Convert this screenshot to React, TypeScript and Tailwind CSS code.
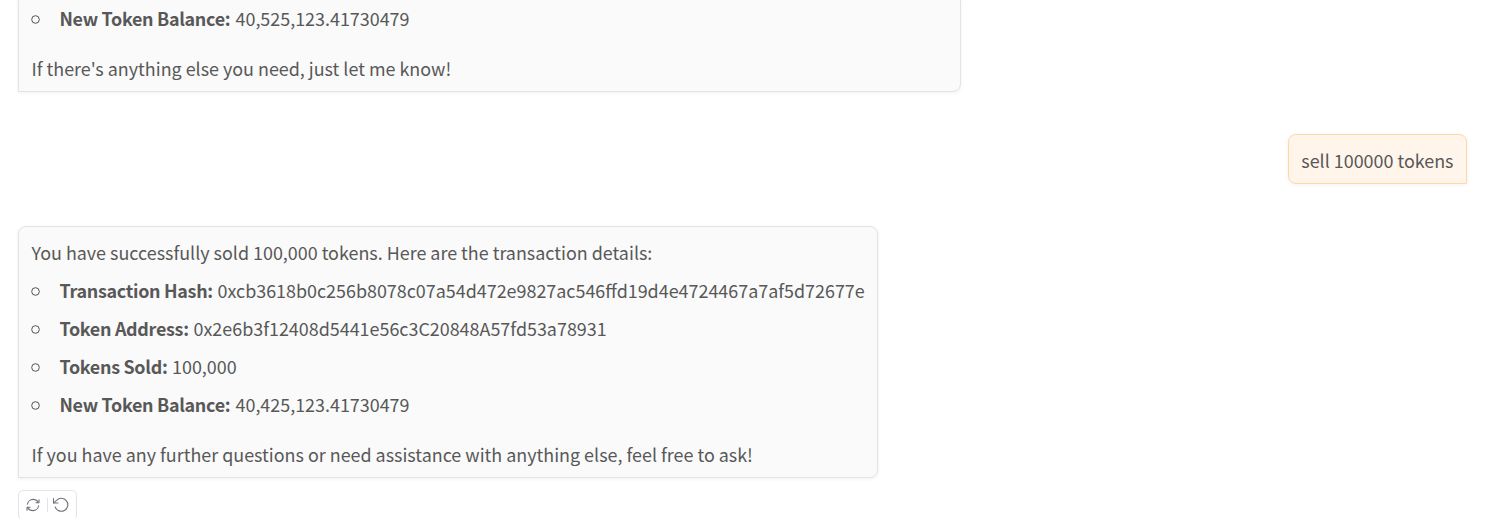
import type { ReactNode } from "react";

function Item({ label, width, children }: { label: string; width: string; children: ReactNode }) {
  return (
    <li className="flex h-[30px] items-center">
      <svg viewBox="0 0 9 9" className="mt-[2.5px] mr-[19.5px] -ml-[0.5px] size-[9px] shrink-0" fill="none" stroke="#525252">
        <circle cx="4.5" cy="4.5" r="3.8" />
      </svg>
      <strong className={`${width} shrink-0 font-bold tracking-[-0.29px]`}>{label}</strong>
      <span>{children}</span>
    </li>
  );
}

function BotMessage({ className, children }: { className: string; children: ReactNode }) {
  return (
    <section
      className={`${className} flex flex-col gap-2 rounded-lg rounded-bl-none border border-[#e4e4e7] bg-[#fafafa] pt-[10px] pr-3 pb-2 pl-[12.5px] shadow-[0_1px_4px_0_rgba(0,0,0,0.06)]`}
    >
      {children}
    </section>
  );
}

function RetryIcon() {
  return (
    <svg viewBox="0 0 24 24" className="size-[18px]" fill="none" stroke="currentColor" strokeWidth="1.5" strokeLinecap="round" strokeLinejoin="round">
      <path d="M19.1679 9C18.0247 6.46819 15.3006 4.5 11.9999 4.5C8.31459 4.5 5.05104 7.44668 4.54932 11" />
      <path d="M16 9H19.4C19.7314 9 20 8.73137 20 8.4V5" />
      <path d="M4.88146 15C5.92458 17.5318 8.64874 19.5 12.0494 19.5C15.7347 19.5 18.9983 16.5533 19.5 13" />
      <path d="M8.04932 15H4.64932C4.31795 15 4.04932 15.2686 4.04932 15.6V19" />
    </svg>
  );
}

function UndoIcon() {
  return (
    <svg viewBox="0 0 18 18" className="size-[18px]" fill="none" stroke="currentColor" strokeWidth="1.1" strokeLinecap="round" strokeLinejoin="round">
      <path d="M1.5 2.5V7H6" />
      <path d="M1.8 6.8L4.6 4.3A6.5 6.5 0 1 1 3.2 11" />
    </svg>
  );
}

export default function App() {
  return (
    <main className="flex h-[518px] w-[1487px] flex-col overflow-hidden bg-white pr-5 pl-[18px] font-['Noto_Sans_CJK_SC',sans-serif] text-[17.92px] leading-[30px] whitespace-nowrap text-[#585858]">
      <BotMessage className="-mt-[8px] h-[100px] w-[943px] shrink-0">
        <ul>
          <Item label="New Token Balance:" width="w-[176px]">40,525,123.41730479</Item>
        </ul>
        <p className="mt-3">If there's anything else you need, just let me know!</p>
      </BotMessage>

      <section className="mt-[42px] flex h-[50px] w-[179px] shrink-0 items-center self-end rounded-lg rounded-br-none border border-[#fed9a8] bg-[#fff5eb] pt-[3px] pr-3 pb-px pl-[12.3px] shadow-[0_1px_4px_0_rgba(0,0,0,0.06)]">
        <p>sell 100000 tokens</p>
      </section>

      <BotMessage className="mt-[42px] h-[252px] w-[860px] shrink-0">
        <p>You have successfully sold 100,000 tokens. Here are the transaction details:</p>
        <ul className="flex flex-col gap-2">
          <Item label="Transaction Hash:" width="w-[158px]">
            0xcb3618b0c256b8078c07a54d472e9827ac546ffd19d4e4724467a7af5d72677e
          </Item>
          <Item label="Token Address:" width="w-[134px]">0x2e6b3f12408d5441e56c3C20848A57fd53a78931</Item>
          <Item label="Tokens Sold:" width="w-[112.5px]">100,000</Item>
          <Item label="New Token Balance:" width="w-[176px]">40,425,123.41730479</Item>
        </ul>
        <p className="mt-3">If you have any further questions or need assistance with anything else, feel free to ask!</p>
      </BotMessage>

      <div className="mt-3 flex h-[30px] w-[59px] shrink-0 items-center rounded-[5px] border border-[#e4e4e7] px-[5px] text-[#71717a]">
        <button aria-label="Retry" className="flex">
          <RetryIcon />
        </button>
        <span className="mr-[4px] ml-[5px] h-[14px] w-px bg-[#e4e4e7]" />
        <button aria-label="Undo" className="flex">
          <UndoIcon />
        </button>
      </div>
    </main>
  );
}
